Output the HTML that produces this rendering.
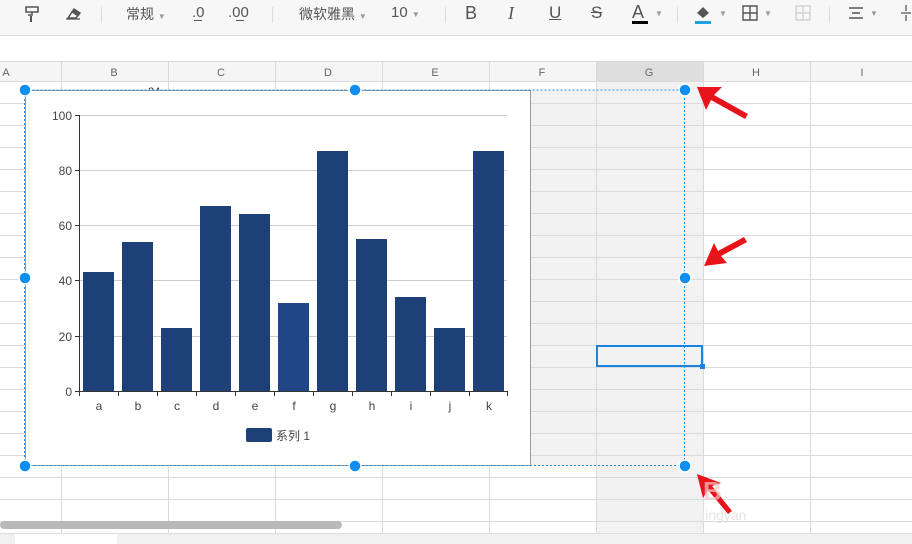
<!DOCTYPE html>
<html><head><meta charset="utf-8"><style>
*{margin:0;padding:0;box-sizing:border-box}
body{width:912px;height:544px;overflow:hidden;background:#fff;font-family:"Liberation Sans","Noto Sans CJK SC",sans-serif;position:relative}
.tb{position:absolute;left:0;top:0;width:912px;height:36px;background:#f7f7f7;border-bottom:1px solid #dcdcdc;color:#555;font-size:14px}
.tb span{position:absolute;top:4px}
.sep{position:absolute;top:7px;width:1px;height:16px;background:#ddd}
.dd{font-size:8px;color:#999}
.abs{position:absolute}
</style></head><body>
<div class="tb">
<svg class="abs" style="left:24px;top:5px" width="16" height="18"><path d="M2 2h12v5H2z M8 7v3H4" fill="none" stroke="#555" stroke-width="1.6"/><path d="M6 11h2v6H6z" fill="#555"/></svg>
<svg class="abs" style="left:65px;top:5px" width="18" height="16"><path d="M3 13l6-9 6 4-4 5z" fill="none" stroke="#555" stroke-width="1.5"/><path d="M9 4l6 4-3 3-6-4z" fill="#555"/><path d="M1 14h14" stroke="#555" stroke-width="1.3"/></svg>
<div class="sep" style="left:101px"></div>
<span style="left:126px">常规 <b class="dd">▼</b></span>
<span style="left:192px;font-size:15px">.0</span><span style="left:228px;font-size:15px">.00</span>
<div class="abs" style="left:194px;top:20px;width:8px;height:1px;background:#555"></div>
<div class="abs" style="left:236px;top:20px;width:8px;height:1px;background:#555"></div>
<div class="sep" style="left:272px"></div>
<span style="left:299px">微软雅黑 <b class="dd">▼</b></span>
<span style="left:391px;font-size:15px">10 <b class="dd">▼</b></span>
<div class="sep" style="left:445px"></div>
<span style="left:465px;font-size:18px;top:3px">B</span>
<span style="left:508px;font-size:18px;top:3px;font-style:italic;font-family:'Liberation Serif'">I</span>
<span style="left:549px;font-size:17px;top:3px;text-decoration:underline">U</span>
<span style="left:591px;font-size:17px;top:3px;text-decoration:line-through">S</span>
<span style="left:632px;font-size:18px;top:2px">A</span><div class="abs" style="left:632px;top:21px;width:16px;height:3px;background:#000"></div><b class="dd abs" style="left:655px;top:9px">▼</b>
<div class="sep" style="left:677px"></div>
<svg class="abs" style="left:694px;top:5px" width="18" height="16"><path d="M3 8l6-6 6 6-6 5z" fill="#555"/></svg><div class="abs" style="left:695px;top:21px;width:16px;height:3px;background:#1ea3e0"></div><b class="dd abs" style="left:719px;top:9px">▼</b>
<svg class="abs" style="left:742px;top:5px" width="16" height="16"><path d="M1 1h14v14H1zM8 1v14M1 8h14" fill="none" stroke="#555" stroke-width="1.4"/></svg><b class="dd abs" style="left:764px;top:9px">▼</b>
<svg class="abs" style="left:795px;top:5px" width="16" height="16"><path d="M1 1h14v14H1zM8 1v14M1 8h14" fill="none" stroke="#ccc" stroke-width="1.2"/></svg>
<div class="sep" style="left:829px"></div>
<svg class="abs" style="left:848px;top:6px" width="16" height="14"><path d="M1 2h14M4 7h8M1 12h14" stroke="#555" stroke-width="1.4"/></svg><b class="dd abs" style="left:870px;top:9px">▼</b>
<svg class="abs" style="left:900px;top:4px" width="12" height="18"><path d="M6 1v6M6 11v6M1 9h10" stroke="#555" stroke-width="1.3"/></svg>
</div>
<svg class="abs" style="left:0;top:0" width="912" height="544">
<rect x="0" y="62" width="912" height="20" fill="#f5f5f5"/>
<rect x="596" y="62" width="107" height="20" fill="#dedede"/>
<rect x="596" y="82" width="107" height="451" fill="#f2f2f2"/>
<rect x="531" y="90" width="65" height="376" fill="#f2f2f2"/>
<g stroke="#dadada">
<line x1="0" y1="61.5" x2="912" y2="61.5"/><line x1="0" y1="81.5" x2="912" y2="81.5"/>
<path d="M0 103.5H912M0 125.5H912M0 147.5H912M0 169.5H912M0 191.5H912M0 213.5H912M0 235.5H912M0 257.5H912M0 279.5H912M0 301.5H912M0 323.5H912M0 345.5H912M0 367.5H912M0 389.5H912M0 411.5H912M0 433.5H912M0 455.5H912M0 477.5H912M0 499.5H912M0 521.5H912"/>
<path d="M61.5 62V533M168.5 62V533M275.5 62V533M382.5 62V533M489.5 62V533M596.5 62V533M703.5 62V533M810.5 62V533"/>
</g>
<g font-size="11" fill="#666" text-anchor="middle" font-family="Liberation Sans">
<text x="6" y="76">A</text><text x="114" y="76">B</text><text x="221" y="76">C</text><text x="328" y="76">D</text><text x="435" y="76">E</text><text x="542" y="76">F</text><text x="649" y="76">G</text><text x="756" y="76">H</text><text x="862" y="76">I</text>
</g>
<rect x="0" y="521" width="342" height="8" rx="4" fill="#b9b9b9"/>
<rect x="0" y="533" width="912" height="11" fill="#f0f0f0"/>
<rect x="15" y="533" width="102" height="11" fill="#fff"/>
<line x1="0" y1="533.5" x2="912" y2="533.5" stroke="#ddd"/>
<rect x="597" y="346" width="105" height="20" fill="none" stroke="#1a82e0" stroke-width="2"/>
<rect x="700" y="364" width="5" height="5" fill="#1a82e0"/>
<text x="148" y="95" font-size="11" fill="#333" font-family="Liberation Sans">34</text>
<rect x="25.5" y="90.5" width="505" height="375" fill="#fff" stroke="#999"/>
<g stroke="#ccc"><path d="M80 115.5H507M80 170.5H507M80 225.5H507M80 280.5H507M80 336.5H507"/></g>
<g fill="#1e4078">
<rect x="83" y="272" width="31" height="119"/><rect x="122" y="242" width="31" height="149"/><rect x="161" y="328" width="31" height="63"/><rect x="200" y="206" width="31" height="185"/><rect x="239" y="214" width="31" height="177"/><rect x="278" y="303" width="31" height="88" fill="#204685"/><rect x="317" y="151" width="31" height="240"/><rect x="356" y="239" width="31" height="152"/><rect x="395" y="297" width="31" height="94"/><rect x="434" y="328" width="31" height="63"/><rect x="473" y="151" width="31" height="240"/>
</g>
<g stroke="#333"><path d="M79.5 115V396M75 115.5H80M75 170.5H80M75 225.5H80M75 280.5H80M75 336.5H80M75 391.5H508"/>
<path d="M79.5 391v5M118.5 391v5M157.5 391v5M196.5 391v5M235.5 391v5M274.5 391v5M313.5 391v5M352.5 391v5M391.5 391v5M430.5 391v5M469.5 391v5M507.5 391v5"/></g>
<g font-size="12" fill="#444" text-anchor="end" font-family="Liberation Sans"><text x="72" y="120">100</text><text x="72" y="175">80</text><text x="72" y="230">60</text><text x="72" y="285">40</text><text x="72" y="341">20</text><text x="72" y="396">0</text></g>
<g font-size="12" fill="#444" text-anchor="middle" font-family="Liberation Sans"><text x="99" y="410">a</text><text x="138" y="410">b</text><text x="177" y="410">c</text><text x="216" y="410">d</text><text x="255" y="410">e</text><text x="294" y="410">f</text><text x="333" y="410">g</text><text x="372" y="410">h</text><text x="411" y="410">i</text><text x="450" y="410">j</text><text x="489" y="410">k</text></g>
<rect x="246" y="428" width="26" height="14" rx="2" fill="#1e4078"/>
<text x="276" y="440" font-size="12" fill="#444" font-family="Liberation Sans,Noto Sans CJK SC,sans-serif">系列 1</text>
<rect x="24.5" y="90" width="660" height="375.5" fill="none" stroke="#1a8ee8" stroke-dasharray="2,2"/>
<g fill="#0d8ef0" stroke="#fff" stroke-width="1.5">
<circle cx="25" cy="90" r="6"/><circle cx="355" cy="90" r="6"/><circle cx="685" cy="90" r="6"/>
<circle cx="25" cy="278" r="6"/><circle cx="685" cy="278" r="6"/>
<circle cx="25" cy="466" r="6"/><circle cx="355" cy="466" r="6"/><circle cx="685" cy="466" r="6"/>
</g>
<g fill="#e8141c">
<path d="M697 87l25 0-8 8 34 19-3 5-34-19-5 10z"/>
<path d="M704 266l10-23 4 8 26-14 3 5-26 14 6 7z"/>
<path d="M697 474l6 24 5-8 20 24 4-3-20-25 9-3z"/>
</g>
<text x="703" y="500" font-size="26" font-weight="bold" fill="#f4c6c8" opacity="0.7" font-family="Liberation Sans">B</text>
<text x="702" y="520" font-size="14" fill="#e4e4e4" font-family="Liberation Sans">jingyan</text>
</svg>
</body></html>
